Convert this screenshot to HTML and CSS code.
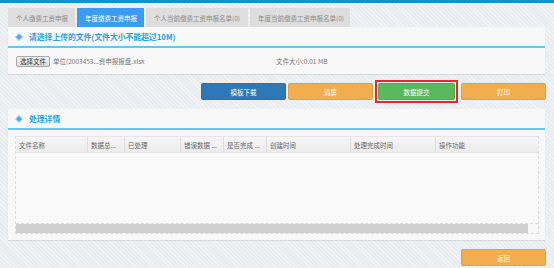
FILE: index.html
```html
<!DOCTYPE html>
<html lang="zh-CN">
<head>
  <meta charset="UTF-8">
  <title>年度缴费工资申报</title>
  <link rel="stylesheet" href="styles.css">
</head>
<body>
  <div class="topbar"></div>
  <div class="main">
    <div class="tabs">
      <div class="tab">个人缴费工资申报</div>
      <div class="tab active">年度缴费工资申报</div>
      <div class="tab">个人当前缴费工资申报名单(0)</div>
      <div class="tab">年度当前缴费工资申报名单(0)</div>
    </div>

    <div class="panel upload">
      <div class="panel-head"><span class="dot"></span>请选择上传的文件(文件大小不能超过10M)</div>
      <div class="file-row">
        <div class="file-pick">
          <button class="file-btn">选择文件</button>
          <span class="file-name">单位(2003453...资申报报盘.xlsx</span>
        </div>
        <span class="file-size">文件大小:0.01 MB</span>
      </div>
    </div>

    <div class="actions">
      <button class="btn blue">模板下载</button>
      <button class="btn orange">清屏</button>
      <div class="marked"><button class="btn green">数据提交</button></div>
      <button class="btn orange print">打印</button>
    </div>

    <div class="panel detail">
      <div class="panel-head"><span class="dot"></span>处理详情</div>
      <div class="grid">
        <div class="grid-head">
          <div class="col c1">文件名称</div>
          <div class="col c2">数据总...</div>
          <div class="col c3">已处理</div>
          <div class="col c4">错误数据 ...</div>
          <div class="col c5">是否完成 ...</div>
          <div class="col c6">创建时间</div>
          <div class="col c7">处理完成时间</div>
          <div class="col c8">操作功能</div>
        </div>
        <div class="grid-body"></div>
        <div class="grid-scroll"><div class="thumb"></div></div>
      </div>
    </div>

    <div class="footer">
      <button class="btn orange">返回</button>
    </div>
  </div>
</body>
</html>
```

FILE: styles.css
```css
body {
  margin: 0;
  font-family: "Noto Sans CJK SC", "Liberation Sans", sans-serif;
  font-size: 6.5px;
  color: #555;
  background-color: #eaedf0;
  background-image: repeating-linear-gradient(45deg, rgba(255,255,255,0.35) 0 1px, transparent 1px 3px);
  height: 268px;
  overflow: hidden;
}
.topbar {
  height: 3px;
  background: #0a98cc;
}
.main {
  padding: 5px 9px 0 8px;
}
.tabs {
  display: flex;
  gap: 2px;
  height: 19px;
}
.tab {
  display: flex;
  align-items: center;
  padding: 0 8px;
  background: #dedede;
  color: #8a8a8a;
  white-space: nowrap;
}
.tabs .tab:nth-child(1) { width: 51px; }
.tabs .tab:nth-child(2) { width: 51px; }
.tabs .tab:nth-child(3) { width: 86px; }
.tabs .tab:nth-child(4) { width: 84px; }
.tab.active {
  background: #3a9cf2;
  color: #fff;
}
.panel {
  background: #f8f8f8;
  box-shadow: 0 1px 1px rgba(0,0,0,0.08);
}
.panel-head {
  height: 19px;
  display: flex;
  align-items: center;
  padding-left: 9px;
  border-bottom: 2px solid #62c9ee;
  color: #25a2e6;
  font-size: 7.8px;
  font-weight: bold;
}
.dot {
  width: 4px;
  height: 4px;
  margin: 0 8px 0 0;
  background: #4aa8e6;
  transform: rotate(45deg);
  box-shadow: 0 0 0 1px #a8d6f5;
}
.file-row {
  height: 26px;
  display: flex;
  align-items: center;
  padding: 0 8px;
}
.file-pick {
  width: 260px;
  display: flex;
  align-items: center;
}
.file-btn {
  font: inherit;
  color: #333;
  height: 11px;
  padding: 0 3px;
  line-height: 9px;
  border: 1px solid #a9a9a9;
  border-radius: 2px;
  background: linear-gradient(#f6f6f6, #dcdcdc);
  margin-right: 3px;
}
.file-name, .file-size {
  color: #777;
}
.actions {
  display: flex;
  justify-content: flex-end;
  align-items: center;
  gap: 2px;
  margin: 6px -1px 6px 0;
  height: 23px;
}
.btn {
  font: inherit;
  color: #fff;
  width: 85px;
  height: 17px;
  border: 1px solid rgba(0,0,0,0.08);
  border-radius: 2px;
  cursor: pointer;
}
.blue { background: #2d79b8; }
.orange { background: #f1ad4e; }
.green { background: #5cb85c; width: 77px; }
.print { margin-left: 1px; }
.marked {
  border: 2px solid #e8262b;
  padding: 1px;
  height: 17px;
}
.detail {
  height: 131px;
}
.grid {
  margin: 6px 6px 0 7px;
  border: 1px dashed #dddddd;
  border-top: none;
  height: 97px;
  display: flex;
  flex-direction: column;
}
.grid-head {
  display: flex;
  height: 15px;
  background: linear-gradient(#f6f6f6, #ececec);
  border-bottom: 1px solid #e2e2e2;
  border-top: 1px solid #e6e6e6;
}
.col {
  display: flex;
  align-items: center;
  padding-left: 3px;
  border-right: 1px solid #dedede;
  color: #666;
  white-space: nowrap;
}
.col.c8 { border-right: none; flex: 1; }
.c1 { width: 68px; }
.c2 { width: 33px; }
.c3 { width: 52px; }
.c4 { width: 39px; }
.c5 { width: 39px; }
.c6 { width: 80px; }
.c7 { width: 81px; }
.grid-body {
  flex: 1;
  background: #f9f9f9;
}
.grid-scroll {
  height: 9px;
  display: flex;
  border-top: 1px dashed #dddddd;
}
.thumb {
  width: 512px;
  background: #cfcfcf;
}
.footer {
  display: flex;
  justify-content: flex-end;
  margin: 9px -1px 0 0;
}
```
